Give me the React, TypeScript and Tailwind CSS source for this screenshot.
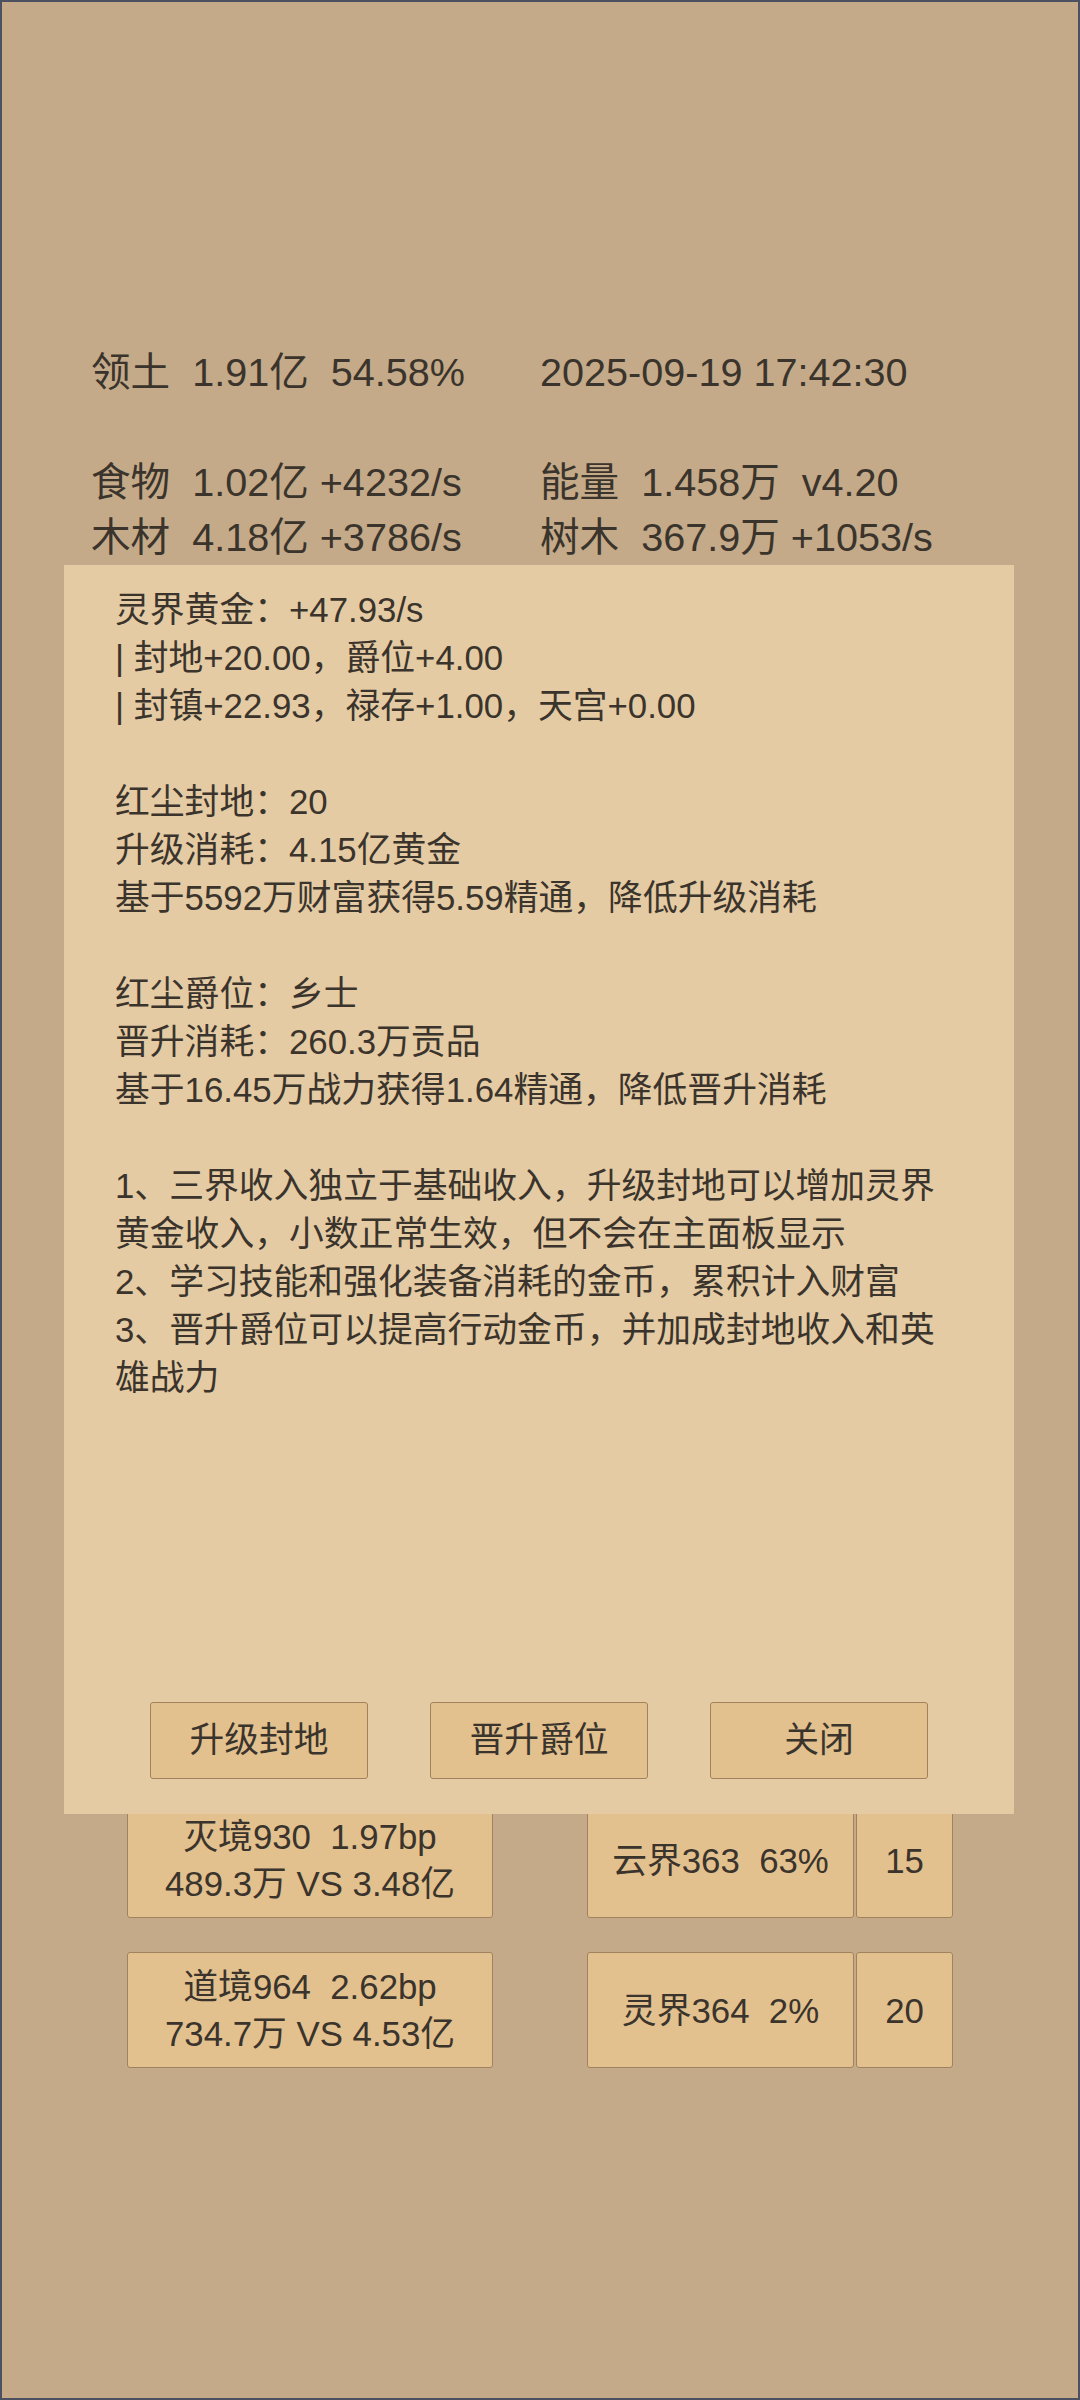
import React from 'react';

const font = { fontFamily: '"Liberation Sans", "Noto Sans CJK SC", sans-serif' };

const stats: [string, string][] = [
  ['领土  1.91亿  54.58%', '2025-09-19 17:42:30'],
  ['', ''],
  ['食物  1.02亿 +4232/s', '能量  1.458万  v4.20'],
  ['木材  4.18亿 +3786/s', '树木  367.9万 +1053/s'],
];

const infoLines = [
  '灵界黄金：+47.93/s',
  '| 封地+20.00，爵位+4.00',
  '| 封镇+22.93，禄存+1.00，天宫+0.00',
  '',
  '红尘封地：20',
  '升级消耗：4.15亿黄金',
  '基于5592万财富获得5.59精通，降低升级消耗',
  '',
  '红尘爵位：乡士',
  '晋升消耗：260.3万贡品',
  '基于16.45万战力获得1.64精通，降低晋升消耗',
  '',
  '1、三界收入独立于基础收入，升级封地可以增加灵界黄金收入，小数正常生效，但不会在主面板显示',
  '2、学习技能和强化装备消耗的金币，累积计入财富',
  '3、晋升爵位可以提高行动金币，并加成封地收入和英雄战力',
];

const realms = [
  { main: ['灭境930  1.97bp', '489.3万 VS 3.48亿'], side: '云界363  63%', count: '15' },
  { main: ['道境964  2.62bp', '734.7万 VS 4.53亿'], side: '灵界364  2%', count: '20' },
];

function Card({ className, children }: { className: string; children: React.ReactNode }) {
  return (
    <div
      className={`flex flex-col items-center justify-center bg-[#e3c18f] border border-[#a0835e] rounded-[3px] text-[34.8px] leading-[47px] whitespace-pre ${className}`}
    >
      {children}
    </div>
  );
}

export default function App() {
  return (
    <div
      className="relative w-[1080px] h-[2400px] bg-[#c4aa88] border-2 border-[#4b5160] text-[#3a342c] overflow-hidden"
      style={font}
    >
      {/* Resource header */}
      <div className="pt-[343px] pl-[89px] grid grid-cols-[449px_1fr] text-[39.6px] leading-[55px] whitespace-pre">
        {stats.map(([l, r], i) => (
          <React.Fragment key={i}>
            <div className="h-[55px]">{l}</div>
            <div className="h-[55px]">{r}</div>
          </React.Fragment>
        ))}
      </div>

      {/* Realm cards */}
      <div className="mt-[1237px] px-[125px] flex flex-col gap-[34px]">
        {realms.map((r, i) => (
          <div key={i} className="flex h-[116px]">
            <Card className="w-[366px]">
              <span>{r.main[0]}</span>
              <span>{r.main[1]}</span>
            </Card>
            <Card className="ml-[94px] w-[267px]">{r.side}</Card>
            <Card className="ml-[2px] w-[97px]">{r.count}</Card>
          </div>
        ))}
      </div>

      {/* Info dialog */}
      <div className="absolute left-[62px] top-[563px] w-[950px] h-[1249px] bg-[#e5cba3] px-[51px] pt-[21px] flex flex-col">
        <div className="text-[34.8px] leading-[48px]">
          {infoLines.map((t, i) => (
            <p key={i} className="min-h-[48px]">
              {t}
            </p>
          ))}
        </div>
        <div className="mt-auto mb-[35px] flex justify-center gap-[62px]">
          {['升级封地', '晋升爵位', '关闭'].map((b) => (
            <button
              key={b}
              className="w-[218px] h-[77px] bg-[#e3c18f] border border-[#a0835e] rounded-[3px] text-[34.8px] text-[#3a342c]"
              style={font}
            >
              {b}
            </button>
          ))}
        </div>
      </div>
    </div>
  );
}
